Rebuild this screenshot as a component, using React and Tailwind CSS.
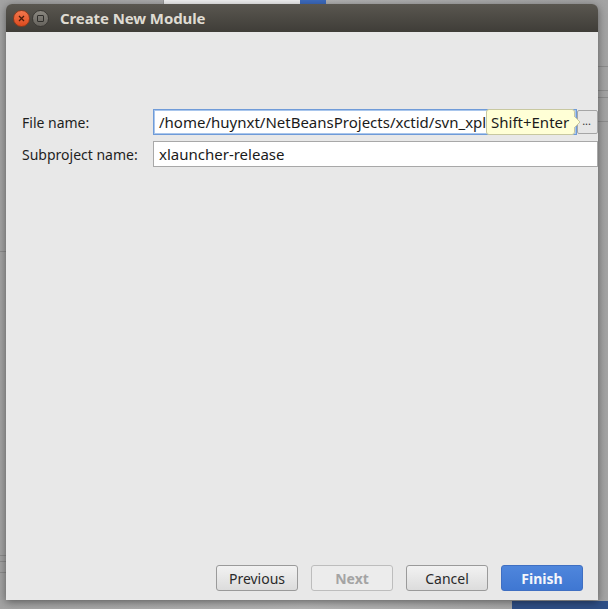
import React from 'react';

const font = { fontFamily: '"Noto Sans", "DejaVu Sans", sans-serif' };

function DialogButton({ label, variant = 'default' }) {
  const base = 'w-[82px] h-[26px] rounded-[3px] border text-[14px] flex items-center justify-center';
  const styles = {
    default: 'border-[#9a9a9a] bg-gradient-to-b from-[#f2f2f2] to-[#dcdcdc] text-[#2a2a2a]',
    disabled: 'border-[#bdbdbd] bg-[#ececec] text-[#a4a4a4] font-bold',
    primary: 'border-[#3f6fc2] bg-gradient-to-b from-[#4f86dc] to-[#3f77d2] text-[#f4f6fb] font-bold',
  };
  return <div className={`${base} ${styles[variant]}`}>{label}</div>;
}

export default function App() {
  return (
    <div className="w-[608px] h-[609px] bg-gradient-to-r from-[#a3a3a3] via-[#b4b4b4] to-[#a3a3a3] relative overflow-hidden" style={font}>
      {/* bits of the window behind */}
      <div className="absolute left-[163px] top-0 w-[138px] h-[4px] bg-[#f3f3f3] border-l border-[#999]" />
      <div className="absolute left-[300px] top-0 w-[26px] h-[4px] bg-[#3d6cc0]" />
      <div className="absolute right-0 top-[66px] w-[10px] h-px bg-[#8c8c8c]" />
      <div className="absolute right-0 top-[90px] w-[10px] h-px bg-[#8c8c8c]" />
      <div className="absolute right-0 top-[97px] w-[10px] h-px bg-[#8c8c8c]" />
      <div className="absolute right-0 top-[121px] w-[10px] h-px bg-[#8c8c8c]" />
      <div className="absolute left-0 top-[251px] w-[6px] h-px bg-[#8c8c8c]" />
      <div className="absolute left-0 top-[555px] w-[6px] h-px bg-[#8c8c8c]" />
      <div className="absolute left-0 top-[561px] w-[6px] h-px bg-[#8c8c8c]" />
      <div className="absolute left-0 top-[572px] w-[6px] h-px bg-[#8c8c8c]" />
      <div className="absolute right-0 bottom-0 w-[96px] h-[8px] bg-[#2f4f86]" />

      <div className="relative ml-[6px] mt-[4px] w-[592px] h-[596px] flex flex-col shadow-[0_2px_8px_rgba(0,0,0,0.45)] rounded-t-[6px]">
        {/* title bar */}
        <div className="h-[28px] rounded-t-[6px] bg-gradient-to-b from-[#5a5750] to-[#3f3d38] flex items-center pl-[7px]">
          <div className="w-[17px] h-[17px] rounded-full bg-gradient-to-b from-[#f3774c] to-[#dd4a1d] border border-[#8e3a1c] flex items-center justify-center">
            <svg width="7" height="7" viewBox="0 0 7 7">
              <path d="M1 1 L6 6 M6 1 L1 6" stroke="#4a1c0a" strokeWidth="1.3" />
            </svg>
          </div>
          <div className="ml-[2px] w-[17px] h-[17px] rounded-full bg-gradient-to-b from-[#8a8780] to-[#66635d] border border-[#3a3834] flex items-center justify-center">
            <div className="w-[7px] h-[7px] border border-[#2f2e2b] rounded-[1px]" />
          </div>
          <div className="ml-[11px] text-[15px] font-bold text-[#dfdbd2] tracking-[-0.1px]">Create New Module</div>
        </div>

        {/* body */}
        <div className="flex-1 bg-[#e8e8e8] flex flex-col pt-[77px] pl-[16px]">
          <div className="flex items-center h-[26px]">
            <div className="w-[131px] shrink-0 whitespace-nowrap text-[14px] text-[#1e1e1e]">File name:</div>
            <div className="flex-1 flex items-center h-[26px] relative">
              <div className="flex-1 h-[26px] bg-white border border-[#6f9bd8] shadow-[inset_0_0_0_1px_#a9c6ec] flex items-center pl-[5px] text-[15px] text-[#1a1a1a] whitespace-nowrap">
                /home/huynxt/NetBeansProjects/xctid/svn_xpl
              </div>
              <div className="w-[21px] h-[24px] shrink-0 border border-[#a6a6a6] rounded-[2px] bg-[#e6e6e6] flex items-center justify-end pr-[6px] text-[11px] text-[#333] leading-none pb-[4px]">...</div>
              {/* tooltip */}
              <div className="absolute left-[333px] top-0 h-[26px] flex items-center">
                <div className="h-[26px] pl-[4px] pr-[5px] bg-[#ffffd6] border border-[#c8c8a0] rounded-[3px] flex items-center text-[15px] text-[#1a1a1a] whitespace-nowrap">
                  Shift+Enter
                </div>
                <svg width="7" height="12" viewBox="0 0 7 12" className="-ml-px">
                  <path d="M0 0 L6 6 L0 12 Z" fill="#ffffd6" />
                  <path d="M0 0 L6 6 L0 12" fill="none" stroke="#c8c8a0" />
                </svg>
              </div>
            </div>
          </div>

          <div className="flex items-center h-[26px] mt-[6px]">
            <div className="w-[131px] shrink-0 whitespace-nowrap text-[14px] text-[#1e1e1e]">Subproject name:</div>
            <div className="flex-1 h-[26px] bg-white border border-[#a8a8a8] flex items-center pl-[5px] text-[15px] text-[#1a1a1a]">
              xlauncher-release
            </div>
          </div>

          <div className="flex-1" />

          <div className="flex justify-end gap-[13px] pr-[15px] pb-[9px]">
            <DialogButton label="Previous" />
            <DialogButton label="Next" variant="disabled" />
            <DialogButton label="Cancel" />
            <DialogButton label="Finish" variant="primary" />
          </div>
        </div>
      </div>
    </div>
  );
}
